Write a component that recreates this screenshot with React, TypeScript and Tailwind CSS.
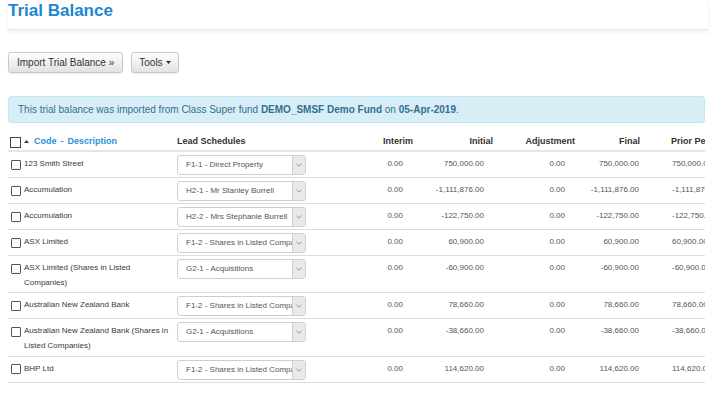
import React from 'react';

type Row = {
    desc: string;
    lead: string;
    amount: string;
};

const rows: Row[] = [
    { desc: '123 Smith Street', lead: 'F1-1 - Direct Property', amount: '750,000.00' },
    { desc: 'Accumulation', lead: 'H2-1 - Mr Stanley Burrell', amount: '-1,111,876.00' },
    { desc: 'Accumulation', lead: 'H2-2 - Mrs Stephanie Burrell', amount: '-122,750.00' },
    { desc: 'ASX Limited', lead: 'F1-2 - Shares in Listed Companies', amount: '60,900.00' },
    { desc: 'ASX Limited (Shares in Listed Companies)', lead: 'G2-1 - Acquisitions', amount: '-60,900.00' },
    { desc: 'Australian New Zealand Bank', lead: 'F1-2 - Shares in Listed Companies', amount: '78,660.00' },
    { desc: 'Australian New Zealand Bank (Shares in Listed Companies)', lead: 'G2-1 - Acquisitions', amount: '-38,660.00' },
    { desc: 'BHP Ltd', lead: 'F1-2 - Shares in Listed Companies', amount: '114,620.00' },
];

function LeadSelect({ value }: { value: string }) {
    return (
        <div className="flex h-[20px] w-[129px] border border-[#cfcfcf] rounded-[3px] bg-white overflow-hidden">
            <div className="flex-1 min-w-0 pl-[8px] text-[8px] leading-[18px] text-[#555] whitespace-nowrap overflow-hidden">
                {value}
            </div>
            <div className="w-[13px] shrink-0 border-l border-[#cfcfcf] bg-[#e9e9e9] flex items-center justify-center">
                <svg width="6" height="4" viewBox="0 0 6 4" fill="none">
                    <path d="M0.5 0.8 L3 3.2 L5.5 0.8" stroke="#8a8a8a" strokeWidth="0.9" />
                </svg>
            </div>
        </div>
    );
}

export default function App() {
    const th = 'text-[9px] font-bold leading-[12px] pt-[7px] pb-[2px] border-b-2 border-[#e5e5e5] text-[#333]';
    const td = 'align-top pt-[3px] pb-[2px] border-b border-[#dddddd]';
    const num = 'pt-[2px] text-[8px] leading-[14.7px] text-[#555] text-right whitespace-nowrap';

    return (
        <div className="min-h-screen bg-white font-['Liberation_Sans',Arial,sans-serif] text-[#333]">
            <div className="ml-2 w-[700px]">
                <div className="h-[30px] pt-[1px] border-b border-[#e8e8e8] shadow-[0_2px_4px_rgba(0,0,0,0.07)]">
                    <h1 className="text-[17px] font-bold leading-[20px] text-[#1a87d0]">Trial Balance</h1>
                </div>

                <div className="mt-[22px] flex gap-[8px]">
                    <button className="h-[21px] px-[8px] text-[10px] text-[#333] border border-[#cacaca] rounded-[3px] bg-[linear-gradient(to_bottom,#ffffff,#e2e2e2)] shadow-[0_1px_1px_rgba(0,0,0,0.08)]">
                        Import Trial Balance »
                    </button>
                    <button className="h-[21px] px-[7px] flex items-center text-[10px] text-[#333] border border-[#cacaca] rounded-[3px] bg-[linear-gradient(to_bottom,#ffffff,#e2e2e2)] shadow-[0_1px_1px_rgba(0,0,0,0.08)]">
                        Tools
                        <svg className="ml-[3px]" width="5" height="3" viewBox="0 0 5 3">
                            <path d="M0 0 L5 0 L2.5 3 Z" fill="#333" />
                        </svg>
                    </button>
                </div>

                <div className="mt-[23px] w-[697px] h-[27px] flex items-center px-[9px] border border-[#bce8f1] bg-[#d9edf7] rounded-[3px] text-[10px] text-[#31708f]">
                    <span>
                        This trial balance was imported from Class Super fund <b>DEMO_SMSF Demo Fund</b> on <b>05-Apr-2019</b>.
                    </span>
                </div>

                <div className="mt-[4px] w-[697px] overflow-hidden">
                    <table className="table-fixed border-collapse w-[719px]">
                        <colgroup>
                            <col className="w-[164px]" />
                            <col className="w-[140px]" />
                            <col className="w-[106px]" />
                            <col className="w-[80px]" />
                            <col className="w-[82px]" />
                            <col className="w-[65px]" />
                            <col className="w-[82px]" />
                        </colgroup>
                        <thead>
                            <tr>
                                <th className={`${th} pl-[2px] text-left`}>
                                    <div className="flex items-center leading-none">
                                        <span className="block w-[11px] h-[11px] border border-[#444] bg-white mt-[3px]" />
                                        <svg className="ml-[3px] mr-[5px]" width="5" height="3" viewBox="0 0 5 3">
                                            <path d="M0 3 L2.5 0 L5 3 Z" fill="#333" />
                                        </svg>
                                        <span className="text-[#2a90d9]">Code</span>
                                        <span className="mx-[4px] text-[#2a90d9]">-</span>
                                        <span className="text-[#2a90d9]">Description</span>
                                    </div>
                                </th>
                                <th className={`${th} pl-[5px] text-left`}>Lead Schedules</th>
                                <th className={`${th} pr-[5px] text-right`}>Interim</th>
                                <th className={`${th} pr-[5px] text-right`}>Initial</th>
                                <th className={`${th} pr-[5px] text-right`}>Adjustment</th>
                                <th className={`${th} pr-[5px] text-right`}>Final</th>
                                <th className={`${th} pl-[26px] text-left whitespace-nowrap`}>Prior Period</th>
                            </tr>
                        </thead>
                        <tbody>
                            {rows.map((row, i) => (
                                <tr key={i}>
                                    <td className={`${td} pl-[3px] pr-0`}>
                                        <div className="flex items-start gap-[3px] pt-[2px] leading-none">
                                            <span className="block w-[10px] h-[10px] shrink-0 mt-[2.5px] border border-[#555] bg-white rounded-[1px]" />
                                            <span className="block text-[8px] leading-[14.7px] text-[#3a3a3a]">{row.desc}</span>
                                        </div>
                                    </td>
                                    <td className={`${td} pl-[5px]`}>
                                        <LeadSelect value={row.lead} />
                                    </td>
                                    <td className={`${td} pr-[15px]`}>
                                        <div className={num}>0.00</div>
                                    </td>
                                    <td className={`${td} pr-[14px]`}>
                                        <div className={num}>{row.amount}</div>
                                    </td>
                                    <td className={`${td} pr-[15px]`}>
                                        <div className={num}>0.00</div>
                                    </td>
                                    <td className={`${td} pr-[6px]`}>
                                        <div className={num}>{row.amount}</div>
                                    </td>
                                    <td className={`${td} pl-[27px]`}>
                                        <div className="pt-[2px] text-[8px] leading-[14.7px] text-[#555] whitespace-nowrap">{row.amount}</div>
                                    </td>
                                </tr>
                            ))}
                        </tbody>
                    </table>
                </div>
            </div>
        </div>
    );
}
